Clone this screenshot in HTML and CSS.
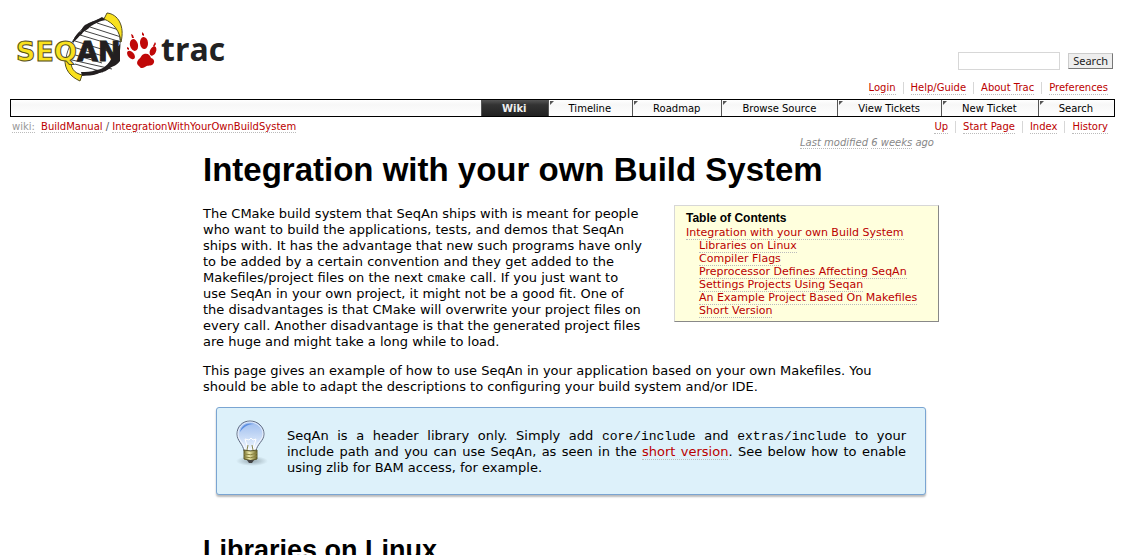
FILE: index.html
```html
<!DOCTYPE html>
<html lang="en">
<head>
<meta charset="utf-8">
<title>Integration with your own Build System – SeqAn</title>
<link rel="stylesheet" href="styles.css">
</head>
<body>
<header class="banner">
  <a class="logo" href="#" aria-label="SeqAn trac">
    <svg class="logo-art" width="220" height="74" viewBox="10 9 220 74" role="img" aria-label="SeqAn trac">
      <path d="M66 57C68 46 72 41 77 34C83 25 94 19 105 17C121 20 123 42 117 60C108 70 96 74 82 74C72 72 68 67 66 57Z" fill="#fff" stroke="#555" stroke-width="1"/>
      <path d="M90 26l31 10M85 30l36 11M80 34l40 12M97 22l22 7M75 63l28 8M72 59l40 9M72 53l30 9M75 40l36 11M73 46l30 9" stroke="#444" stroke-width="1" fill="none"/>
      <path d="M73 40C75 35 77 32 81 30C82 27 84 24 87 23C92 20 96 20 102 16L106 19C99 20 95 23 91 25C88 29 83 30 82 33C79 35 76 39 73 42Z" fill="#231f20"/>
      <path d="M120 43V60C116 65 113 65 110 67C106 71 101 71 97 73C92 75 88 74 82 75L81 71C86 71 91 71 96 69C101 69 107 65 110 60Z" fill="#231f20"/>
      <path d="M107 12C118 13 125 25 121 41C120 31 114 22 104 18Z" fill="#f9e11e" stroke="#554f20" stroke-width="1"/>
      <path d="M65 57C64 69 71 76 80 80L82 74C74 72 70 67 71 57Z" fill="#f9e11e" stroke="#554f20" stroke-width="1"/>
      <text class="logo-seq" x="16" y="60">SEQ</text>
      <text class="logo-an" x="77" y="60">AN</text>
      <g fill="#c00808">
        <path d="M144 53C148 52 150 54 151 57C155 58 155 62 152 64C150 65 147 64 145 66C142 68 140 67 139 65C136 63 137 60 139 58C141 57 141 54 144 53Z"/>
        <ellipse cx="134" cy="44" rx="4" ry="6" transform="rotate(-14 134 44)"/>
        <ellipse cx="144" cy="42" rx="4" ry="6" transform="rotate(-5 144 42)"/>
        <ellipse cx="153" cy="50" rx="3" ry="5" transform="rotate(24 153 50)"/>
        <ellipse cx="131" cy="54" rx="3" ry="5" transform="rotate(-40 131 54)"/>
        <path d="M131 33l2 1 1 3-2 0zM142 31l2 2 0 2-2-1zM155 41l1 2-2 3-1-1zM127 46l2 1 0 2-2-1z"/>
      </g>
      <text class="logo-trac" x="161" y="60">trac</text>
    </svg>
  </a>
  <div class="tools">
    <form class="search">
      <input class="search-box" type="text" aria-label="Search">
      <button class="search-button" type="button">Search</button>
    </form>
    <nav class="links" aria-label="Account">
      <a href="#">Login</a><a href="#">Help/Guide</a><a href="#">About Trac</a><a href="#">Preferences</a>
    </nav>
  </div>
</header>
<nav class="mainnav" aria-label="Main">
  <a class="tab active" href="#">Wiki</a>
  <a class="tab" href="#">Timeline</a>
  <a class="tab" href="#">Roadmap</a>
  <a class="tab" href="#">Browse Source</a>
  <a class="tab" href="#">View Tickets</a>
  <a class="tab" href="#">New Ticket</a>
  <a class="tab" href="#">Search</a>
</nav>
<div class="context">
  <div class="path"><a class="first" href="#">wiki:</a> <a href="#">BuildManual</a> / <a href="#">IntegrationWithYourOwnBuildSystem</a></div>
  <nav class="links" aria-label="Page">
    <a href="#">Up</a><a href="#">Start Page</a><a href="#">Index</a><a href="#">History</a>
  </nav>
</div>
<main class="content">
  <p class="modified"><a href="#">Last modified</a> <a href="#">6 weeks</a> ago</p>
  <h1>Integration with your own Build System</h1>
  <aside class="toc">
    <h4>Table of Contents</h4>
    <ol>
      <li><a href="#">Integration with your own Build System</a>
        <ol class="sub">
          <li><a href="#">Libraries on Linux</a></li>
          <li><a href="#">Compiler Flags</a></li>
          <li><a href="#">Preprocessor Defines Affecting SeqAn</a></li>
          <li><a href="#">Settings Projects Using Seqan</a></li>
          <li><a href="#">An Example Project Based On Makefiles</a></li>
          <li><a href="#">Short Version</a></li>
        </ol>
      </li>
    </ol>
  </aside>
  <p>The CMake build system that SeqAn ships with is meant for people who want to build the applications, tests, and demos that SeqAn ships with. It has the advantage that new such programs have only to be added by a certain convention and they get added to the Makefiles/project files on the next <code>cmake</code> call. If you just want to<br> use SeqAn in your own project, it might not be a good fit. One of<br> the disadvantages is that CMake will overwrite your project files on<br> every call. Another disadvantage is that the generated project files<br> are huge and might take a long while to load.</p>
  <p>This page gives an example of how to use SeqAn in your application based on your own Makefiles. You<br> should be able to adapt the descriptions to configuring your build system and/or IDE.</p>
  <div class="tip">
    <svg class="bulb" width="34" height="48" viewBox="0 0 34 48" aria-hidden="true">
      <defs>
        <linearGradient id="glass" x1="0" y1="0" x2="0" y2="1"><stop offset="0" stop-color="#9dbdf0"/><stop offset="0.400" stop-color="#bdd3f4"/><stop offset="1" stop-color="#f2f8ff"/></linearGradient>
        <linearGradient id="brass"><stop offset="0" stop-color="#77702c"/><stop offset="0.400" stop-color="#f1edae"/><stop offset="1" stop-color="#6b6424"/></linearGradient>
        <radialGradient id="shade"><stop offset="0" stop-color="#667780" stop-opacity="0.600"/><stop offset="1" stop-color="#667780" stop-opacity="0"/></radialGradient>
      </defs>
      <ellipse cx="16" cy="41" rx="16" ry="5" fill="url(#shade)"/>
      <path d="M14 1C6 1 1 7 1 14C1 21 7 24 8 31H20C21 24 28 21 28 14C28 7 22 1 14 1Z" fill="url(#glass)" stroke="#626c80"/>
      <path d="M14 2C7 2 2 8 2 14C2 20 8 23 9 29H19C20 23 27 20 27 14C27 8 21 2 14 2Z" fill="none" stroke="#fff" stroke-opacity="0.700"/>
      <path d="M4 12C5 5 12 2 18 4C11 4 7 8 4 12Z" fill="#5d8fe0"/>
      <path d="M12 29L9 19L13 20L15 18L17 20L20 19L17 29" fill="none" stroke="#fff"/>
      <path d="M11 30l1-5M17 30l-1-5" stroke="#8b8750" fill="none"/>
      <path d="M8 30Q14 32 21 30V39Q15 42 8 39Z" fill="url(#brass)" stroke="#5e5a2a"/>
      <path d="M8 34Q15 36 21 33M8 37Q15 39 21 36" fill="none" stroke="#8a8440"/>
      <path d="M11 40H18L16 43H13Z" fill="#444"/>
    </svg>
    <p><span class="spread">SeqAn is a header library only. Simply add <code>core/include</code> and <code>extras/include</code> to your<br> include path and you can use SeqAn, as seen in the <a href="#">short version</a>. See below how to enable</span> using zlib for BAM access, for example.</p>
  </div>
  <h2>Libraries on Linux</h2>
</main>
</body>
</html>
```
FILE: styles.css
```css
html { overflow: hidden; }
body {
  margin: 10px;
  background: #fff;
  color: #000;
  font: 13px/16px Verdana, "DejaVu Sans", sans-serif;
}
a { color: #b00; text-decoration: none; border-bottom: 1px dotted #bbb; }
code { font: 13px/12px "Liberation Mono", monospace; }

.banner { display: flex; justify-content: space-between; height: 89px; }
.logo { border: 0; align-self: flex-start; }
.logo-art { display: block; }
.logo-seq, .logo-an { font: bold 27px "DejaVu Sans", sans-serif; }
.logo-seq { fill: #f9e11e; stroke: #554f20; stroke-width: 1px; }
.logo-an { fill: #231f20; stroke: #231f20; stroke-width: 1px; }
.logo-trac { font: bold 32px "Open Sans", sans-serif; fill: #222; }

.tools { display: flex; flex-direction: column; align-items: flex-end; justify-content: flex-end; gap: 12px; padding-bottom: 4px; }
.search { display: flex; align-items: center; gap: 8px; margin: 0 2px 0 0; }
.search-box { box-sizing: border-box; width: 102px; height: 18px; border: 1px solid #d7d7d7; padding: 0 4px; font: inherit; }
.search-button {
  box-sizing: border-box; height: 16px; padding: 0 4px;
  border: 1px solid; border-color: #ccc #777 #777 #ccc;
  background: #eee; color: #222;
  font: 11px/12px "Noto Sans", sans-serif;
}
.links { display: flex; font-size: 10px; line-height: 12px; padding-right: 7px; }
.links a { position: relative; margin-left: 15px; }
.links a + a::before { content: ""; position: absolute; left: -8px; top: 0; height: 12px; border-left: 1px solid #d7d7d7; }

.mainnav {
  display: flex; justify-content: flex-end;
  border: 1px solid #000;
  background: linear-gradient(#fff, #f7f7f7 30%, #fff);
  font-size: 10px; line-height: 14px;
}
.tab { position: relative; padding: 2px 21px 0 20px; border: 0; border-left: 1px solid #555; color: #000; }
.tab:not(.active)::before { content: ""; position: absolute; left: 1px; top: 1px; border-right: 4px solid transparent; border-top: 4px solid #555; }
.tab.active { background: linear-gradient(#555, #333 30%, #222); color: #eee; font-weight: bold; }

.context { display: flex; justify-content: space-between; padding: 4px 0 0 2px; font-size: 10px; line-height: 12px; color: #555; }
.context .first { color: #999; margin-right: 3px; }

.content { max-width: 736px; margin: 0 auto; padding-left: 17px; }
.modified { margin: 2px 5px 0 0; text-align: right; font-size: 10px; line-height: 14px; font-style: italic; color: #888; }
.modified a { color: inherit; }
h1, h2, h4 { font-family: Arial, "Liberation Sans", sans-serif; margin: 0; }
h1 { font-size: 33px; line-height: 40px; }
h2 { font-size: 27px; line-height: 32px; }
.content p { margin-bottom: 13px; }
.content .modified { margin-bottom: 0; }
.content > h1 + .toc { margin-top: 15px; }
.content > .toc + p { margin-top: 16px; }
.toc {
  float: right; box-sizing: border-box; width: 265px;
  margin: 0 0 16px 16px; padding: 5px 11px 4px;
  border: 1px solid; border-color: #d7d7d7 #888 #888 #d7d7d7;
  background: #ffd; font-size: 11px; line-height: 13px;
}
.toc h4 { font-size: 12px; line-height: 14px; padding-bottom: 1px; }
.toc ol { list-style: none; margin: 0; padding: 0; }
.toc .sub { padding-left: 13px; }
.toc li { white-space: nowrap; }
.tip {
  display: flex; gap: 17px; margin: 12px 13px; padding: 12px 19px 18px;
  border: 1px solid #7aa5d2; border-radius: 3px;
  background: #ddf1fa; box-shadow: 0 2px 2px #bbb;
}
.content > p + .tip { margin-top: -1px; }
.content > .toc + p + p { margin-bottom: 13px; }
.bulb { flex: none; }
.content .tip p { flex: 1; margin: 8px 0 0; }
.spread { display: block; text-align: justify; text-align-last: justify; }
.content h2 { margin-top: 39px; }
```
